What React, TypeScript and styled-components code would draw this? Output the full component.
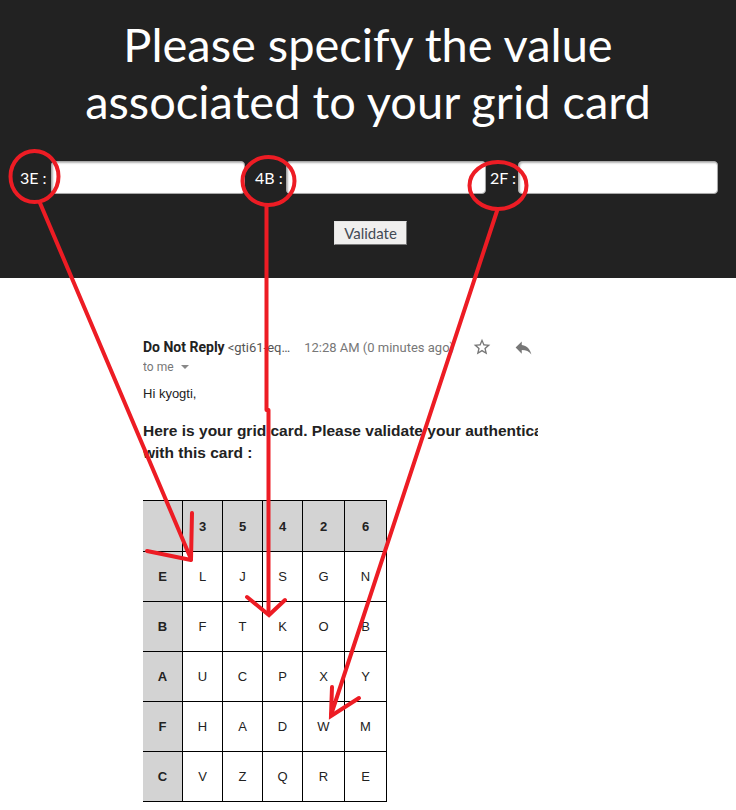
import React from "react";
import styled, { createGlobalStyle } from "styled-components";

const GlobalStyle = createGlobalStyle`
  html, body { margin: 0; padding: 0; background: #fff; }
  body { font-family: "Lato", "Liberation Sans", sans-serif; }
  * { box-sizing: border-box; }
`;

const Page = styled.div`
  position: relative;
  width: 736px;
  height: 810px;
  overflow: hidden;
  background: #fff;
`;

const Header = styled.header`
  background: #222;
  height: 278px;
  padding-top: 16px;
  display: flex;
  flex-direction: column;
  align-items: center;
`;

const Title = styled.h1`
  margin: 0;
  font-family: "Lato", sans-serif;
  font-weight: 400;
  font-size: 47px;
  line-height: 57px;
  color: #fff;
  text-align: center;
`;

const FieldRow = styled.div`
  display: flex;
  align-items: center;
  align-self: stretch;
  margin-top: 31px;
  padding-left: 20px;
`;

const Field = styled.label<{ $after: number }>`
  display: flex;
  align-items: center;
  margin-right: ${(p) => p.$after}px;
`;

const FieldLabel = styled.span<{ $w: number }>`
  width: ${(p) => p.$w}px;
  color: #fff;
  font-family: "Lato", sans-serif;
  font-size: 16px;
  white-space: pre;
`;

const FieldInput = styled.input<{ $w: number }>`
  width: ${(p) => p.$w}px;
  height: 33px;
  border: 1px solid #a9a9a9;
  border-radius: 4px;
  background: #fff;
  box-shadow: inset 1px 1px 2px rgba(0, 0, 0, 0.3);
  outline: none;
`;

const ValidateButton = styled.button`
  margin: 27px 0 0 5px;
  width: 73px;
  height: 24px;
  padding: 0;
  font-family: "Lato", sans-serif;
  font-size: 15px;
  color: #434a54;
  background: #f0efee;
  border: 1px solid;
  border-color: #e4e4e4 #7a7a7a #7a7a7a #e4e4e4;
  border-radius: 0;
`;

const Mail = styled.section`
  margin-left: 143px;
  width: 395px;
  overflow: hidden;
  padding-top: 59px;
  font-family: "Roboto", "Liberation Sans", sans-serif;
`;

const SenderRow = styled.div`
  display: flex;
  align-items: center;
  height: 20px;
  white-space: nowrap;
`;

const SenderName = styled.span`
  font-size: 14px;
  font-weight: 700;
  color: #222;
`;

const SenderAddress = styled.span`
  margin-left: 3px;
  font-size: 13px;
  color: #555;
`;

const SentTime = styled.span`
  margin-left: 14px;
  font-size: 13px;
  color: #777;
`;

const IconButton = styled.span<{ $ml: number }>`
  display: inline-flex;
  flex-shrink: 0;
  margin-left: ${(p) => p.$ml}px;
  color: #777;
`;

const ToRow = styled.div`
  display: flex;
  align-items: center;
  height: 18px;
  margin-top: 1px;
  font-size: 12px;
  color: #777;
`;

const Caret = styled.span`
  width: 0;
  height: 0;
  margin-left: 7px;
  border-left: 4px solid transparent;
  border-right: 4px solid transparent;
  border-top: 4px solid #888;
`;

const Greeting = styled.p`
  margin: 10px 0 0;
  line-height: 16px;
  font-family: "Liberation Sans", Arial, sans-serif;
  font-size: 13px;
  color: #222;
`;

const Lead = styled.p`
  margin: 18px 0 0;
  font-family: "Liberation Sans", Arial, sans-serif;
  font-size: 15.5px;
  font-weight: 700;
  line-height: 22px;
  color: #222;
  white-space: nowrap;
`;

const Card = styled.table`
  margin: 36px 0 0 -1px;
  border-collapse: collapse;
  table-layout: fixed;
  font-family: "Liberation Sans", Arial, sans-serif;
  font-size: 13px;
  color: #222;
`;

const Cell = styled.td<{ $head?: boolean }>`
  width: 40px;
  height: 50px;
  padding: 0;
  border: 1px solid #000;
  text-align: center;
  vertical-align: middle;
  background: ${(p) => (p.$head ? "#d3d3d3" : "#fff")};
  font-weight: ${(p) => (p.$head ? 700 : 400)};
  &:nth-child(n + 5) {
    width: 42px;
  }
`;

const HeadRow = styled.tr`
  height: 51px;
`;

const BodyRow = styled.tr`
  height: 50px;
`;

const Annotations = styled.svg`
  position: absolute;
  top: 0;
  left: 0;
  pointer-events: none;
`;

const cols = ["3", "5", "4", "2", "6"];
const rows: [string, string[]][] = [
  ["E", ["L", "J", "S", "G", "N"]],
  ["B", ["F", "T", "K", "O", "B"]],
  ["A", ["U", "C", "P", "X", "Y"]],
  ["F", ["H", "A", "D", "W", "M"]],
  ["C", ["V", "Z", "Q", "R", "E"]],
];

const fields = [
  { label: "3E :", lw: 31, w: 194, after: 10 },
  { label: "4B :", lw: 31, w: 200, after: 4 },
  { label: "2F :", lw: 28, w: 200, after: 0 },
];

const StarIcon = () => (
  <svg width="20" height="20" viewBox="0 0 24 24" fill="currentColor">
    <path d="M22 9.24l-7.19-.62L12 2 9.19 8.63 2 9.24l5.46 4.73L5.82 21 12 17.27 18.18 21l-1.63-7.03L22 9.24zM12 15.4l-3.76 2.27 1-4.28-3.32-2.88 4.38-.38L12 6.1l1.71 4.04 4.38.38-3.32 2.88 1 4.28L12 15.4z" />
  </svg>
);

const ReplyIcon = () => (
  <svg width="21" height="21" viewBox="0 0 24 24" fill="currentColor">
    <path d="M10 9V5l-7 7 7 7v-4.1c5 0 8.5 1.6 11 5.1-1-5-4-10-11-11z" />
  </svg>
);

export default function App() {
  const red = "#ed1c24";
  return (
    <>
      <GlobalStyle />
      <Page>
        <Header>
          <Title>
            Please specify the value
            <br />
            associated to your grid card
          </Title>
          <FieldRow>
            {fields.map((f) => (
              <Field key={f.label} $after={f.after}>
                <FieldLabel $w={f.lw}>{f.label}</FieldLabel>
                <FieldInput $w={f.w} type="text" />
              </Field>
            ))}
          </FieldRow>
          <ValidateButton type="button">Validate</ValidateButton>
        </Header>

        <Mail>
          <SenderRow>
            <SenderName>Do Not Reply</SenderName>
            <SenderAddress>&lt;gti61-eq…</SenderAddress>
            <SentTime>12:28 AM (0 minutes ago)</SentTime>
            <IconButton $ml={18}>
              <StarIcon />
            </IconButton>
            <IconButton $ml={21}>
              <ReplyIcon />
            </IconButton>
          </SenderRow>
          <ToRow>
            to me
            <Caret />
          </ToRow>
          <Greeting>Hi kyogti,</Greeting>
          <Lead>
            Here is your grid card. Please validate your authentication
            <br />
            with this card :
          </Lead>
          <Card>
            <thead>
              <HeadRow>
                <Cell $head />
                {cols.map((c) => (
                  <Cell as="th" key={c} $head>
                    {c}
                  </Cell>
                ))}
              </HeadRow>
            </thead>
            <tbody>
              {rows.map(([r, vals]) => (
                <BodyRow key={r}>
                  <Cell as="th" $head>
                    {r}
                  </Cell>
                  {vals.map((v, i) => (
                    <Cell key={i}>{v}</Cell>
                  ))}
                </BodyRow>
              ))}
            </tbody>
          </Card>
        </Mail>

        <Annotations width="736" height="810" viewBox="0 0 736 810">
          <g fill="none" stroke={red} strokeWidth="4" strokeLinecap="round">
            <ellipse cx="34.5" cy="176.5" rx="24" ry="25.5" />
            <ellipse cx="268.5" cy="181" rx="26" ry="24" />
            <ellipse cx="498" cy="185.5" rx="28.5" ry="23.5" />
            <path d="M40 203 L191 559" />
            <path d="M192 513 L191 560 M147 551 L191 560" />
            <path d="M266.5 207 L266.5 410 M268.5 410 L268.5 614" />
            <path d="M247 597 L269 615 L285 600" />
            <path d="M497 211 L331 715" />
            <path d="M332 687 L331 716 L359 698" />
          </g>
        </Annotations>
      </Page>
    </>
  );
}
